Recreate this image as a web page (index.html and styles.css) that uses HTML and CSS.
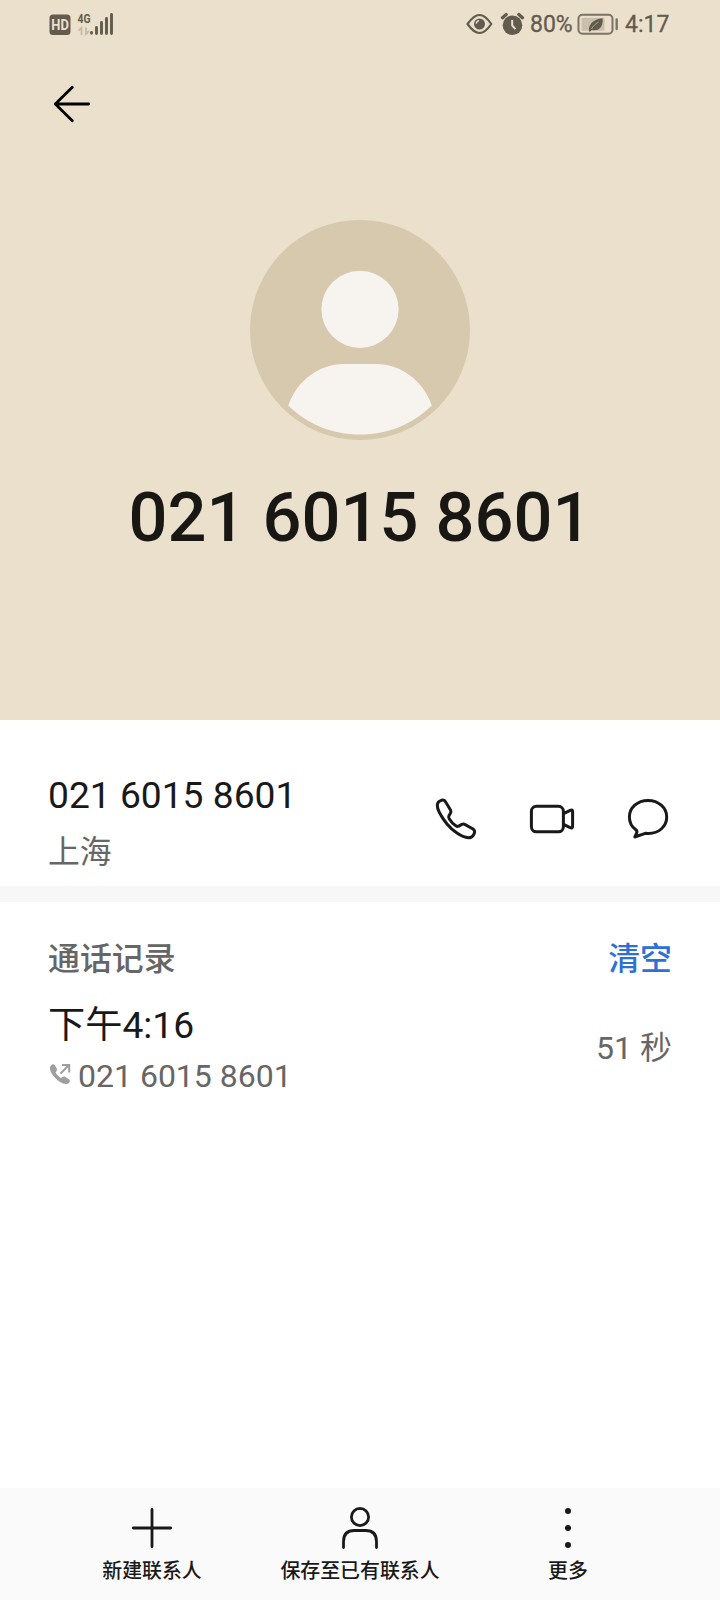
FILE: index.html
```html
<!DOCTYPE html>
<html lang="zh-CN">
<head>
<meta charset="utf-8">
<title>021 6015 8601</title>
<link rel="stylesheet" href="styles.css">
</head>
<body>
<div class="screen">
  <header class="hero">
    <div class="status">
      <svg class="status-left" viewBox="48 8 68 32" width="68" height="32">
        <rect x="49.500" y="14.500" width="21" height="20.500" rx="3.500" fill="#625b4e"/>
        <text class="hd" x="51.300" y="30" textLength="17.500" lengthAdjust="spacingAndGlyphs">HD</text>
        <text class="net" x="77.500" y="23" textLength="13" lengthAdjust="spacingAndGlyphs">4G</text>
        <path d="M78.500 30.500l3-2.500V35M86 27.500V34l3-3" fill="none" stroke="#c4baa7" stroke-width="1.800"/>
        <path d="M91.500 32.500v.8M96.500 27.500v6M101.500 22.500v11M106.500 18.500v15M111.500 14.500v19" stroke="#625b4e" stroke-width="2.900" stroke-linecap="round"/>
      </svg>
      <div class="status-right">
        <svg class="eye" viewBox="466 12 27 24" width="27" height="24" fill="none" stroke="#625b4e">
          <path d="M467.500 24C472 17.700 475.500 15 479.500 15S487 17.700 491.300 24C487 30.300 483.500 33 479.500 33S472 30.300 467.500 24Z" stroke-width="2.200" stroke-linejoin="round"/>
          <circle cx="479.500" cy="24" r="5.500" fill="#625b4e" stroke="none"/>
          <path d="M476.300 23.600a3.200 3.200 0 0 1 2.800-2.900" stroke="#ebe0cc" stroke-width="1.300"/>
        </svg>
        <svg class="alarm" viewBox="500 12 25 24" width="25" height="24">
          <circle cx="512.500" cy="25.200" r="9.800" fill="#625b4e"/>
          <path d="M502.500 17.800l3.700-3.300M522.500 17.800l-3.700-3.300" stroke="#625b4e" stroke-width="3.200" stroke-linecap="round"/>
          <path d="M512.200 20v5.300l3.200 3.800" fill="none" stroke="#ebe0cc" stroke-width="2"/>
        </svg>
        <span class="pct">80%</span>
        <svg class="battery" viewBox="577 12 42 24" width="42" height="24">
          <rect x="578.500" y="14.800" width="34" height="19" rx="4" fill="none" stroke="#7b7466" stroke-width="2"/>
          <rect x="581.500" y="17.800" width="23" height="13" rx="1" fill="#c9bfab"/>
          <path d="M589 31.500c-1-7 4.500-12.500 13.500-13.200 1.200 8-3.500 13.600-10.800 11.700l-1.700 1.800Z" fill="#625b4e"/>
          <path d="M591.500 29c1.500-3 4-5.200 7-6.800" fill="none" stroke="#c9bfab" stroke-width=".7"/>
          <path d="M616.700 19.500v9.500" stroke="#7b7466" stroke-width="2.400" stroke-linecap="round"/>
        </svg>
        <span class="clock">4:17</span>
      </div>
    </div>
    <svg class="back" viewBox="48 80 48 48" width="48" height="48" fill="none" stroke="#000" stroke-width="2.800" stroke-linecap="round" stroke-linejoin="round">
      <path d="M72.300 87.300L55.300 104L72.300 120.700M55.300 104H88.700"/>
    </svg>
    <svg class="avatar" viewBox="0 0 220 220" width="220" height="220">
      <circle cx="110" cy="110" r="110" fill="#d7c9ae"/>
      <g fill="#f7f3ee">
        <circle cx="110" cy="89.300" r="38.600"/>
        <path d="M93 144H127C150 144 173 160 181.800 185.500C163 204 138 214.500 110 214.500S57 204 38.200 185.500C47 160 70 144 93 144Z"/>
      </g>
    </svg>
    <h1 class="name">021 6015 8601</h1>
  </header>

  <section class="contact">
    <div>
      <div class="number">021 6015 8601</div>
      <div class="place">上海</div>
    </div>
    <div class="actions">
      <svg viewBox="432 795 48 48" width="48" height="48">
        <path d="M439 801.500L441.800 800.200Q444.200 799.700 445.500 801.800L450.500 810Q451.400 811.700 450.300 813.400L448.900 815.800Q448.200 817.200 449.200 818.800Q451.800 823.200 455.800 825.800Q457.300 826.800 458.800 826.100L461.800 824.400Q463.500 823.700 465.200 824.600L473 829Q475.200 830.500 474.400 833L473.300 835.300Q471.700 837.700 468.500 837.700C461 837.500 451.500 829.500 447 824C441.500 817 437 809.500 437.300 805Q437.500 802.800 439 801.500Z"/>
      </svg>
      <svg viewBox="528 795 48 48" width="48" height="48">
        <rect x="531.400" y="806.300" width="32" height="25.500" rx="5"/>
        <path d="M563.500 813.700L570.200 810.300Q572.600 809.300 572.600 811.700V826.300Q572.600 828.700 570.200 827.700L563.500 824.300"/>
      </svg>
      <svg viewBox="624 795 48 48" width="48" height="48">
        <path d="M634.800 837L646 833.200Q647.200 833.500 648.500 833.500C659 833.500 666.700 826.300 666.700 817C666.700 807.700 658.500 800.400 648 800.400S629.400 807.700 629.400 817C629.400 822.500 632 827 635.800 829.800Q637.500 831 636.600 833.200Z"/>
      </svg>
    </div>
  </section>

  <section class="log">
    <div class="log-head"><span>通话记录</span><span class="clear">清空</span></div>
    <div class="call">
      <div>
        <div class="time">下午4:16</div>
        <div class="line">
          <svg viewBox="49 1062 24 24" width="24" height="24">
            <path d="M51 1065.500Q53 1063.500 54.800 1065L57 1069Q57.500 1070.300 55.500 1072.500Q57.500 1076 61 1078Q63 1076 64.500 1076.500L69.300 1079.500Q70.800 1081 69 1083Q66.500 1085 62 1083C56.500 1080.500 49.300 1072.500 50 1067.500Q50.200 1066.200 51 1065.500Z" fill="#9e9e9e"/>
            <path d="M60.500 1073.500L69 1065M62 1065H69.200V1072.500" fill="none" stroke="#9e9e9e" stroke-width="2"/>
          </svg>
          <span>021 6015 8601</span>
        </div>
      </div>
      <div class="duration">51 秒</div>
    </div>
  </section>

  <nav class="bar">
    <div class="item">
      <svg viewBox="0 0 48 48" width="48" height="48"><path d="M24 5.300V42.700M5.300 24H42.700"/></svg>
      <span>新建联系人</span>
    </div>
    <div class="item">
      <svg viewBox="0 0 48 48" width="48" height="48"><circle cx="24" cy="13" r="8.600"/><path d="M7.500 43.500V37.500Q7.500 26.500 18.500 26.500H29.500Q40.500 26.500 40.500 37.500V43.500"/></svg>
      <span>保存至已有联系人</span>
    </div>
    <div class="item">
      <svg viewBox="0 0 48 48" width="48" height="48"><g class="dots"><circle cx="24" cy="7" r="3"/><circle cx="24" cy="24" r="3"/><circle cx="24" cy="41" r="3"/></g></svg>
      <span>更多</span>
    </div>
  </nav>
</div>
</body>
</html>
```
FILE: styles.css
```css
* { box-sizing: border-box; }
body {
  margin: 0;
  background: #fff;
  color: #191919;
  font-family: Roboto, "Noto Sans CJK SC", sans-serif;
}
svg { display: block; flex: none; }
.screen {
  width: 720px;
  height: 1600px;
  display: flex;
  flex-direction: column;
}
.hero {
  height: 720px;
  background: #ebe0cc;
  display: flex;
  flex-direction: column;
  align-items: center;
}
.status {
  width: 100%;
  height: 48px;
  padding: 0 48px;
  display: flex;
  justify-content: space-between;
  align-items: center;
  color: #625b4e;
}
.hd { font: 700 14px Roboto, sans-serif; fill: #ebe0cc; }
.net { font: 700 13.500px Roboto, sans-serif; fill: #625b4e; }
.status-right {
  display: flex;
  align-items: center;
  font-size: 23px;
  line-height: 28px;
  -webkit-text-stroke: 0.3px #625b4e;
}
.alarm { margin-left: 7px; }
.pct { margin-left: 5px; padding-top: 2px; width: 42px; white-space: nowrap; }
.battery { margin-left: 5px; }
.clock { margin-left: 6px; padding-top: 2px; width: 47px; white-space: nowrap; }
.back { align-self: flex-start; margin: 32px 0 0 48px; }
.avatar { margin-top: 92px; }
.name {
  margin: 38px 0 0;
  font-weight: 500;
  font-size: 68.600px;
  line-height: 80px;
  white-space: nowrap;
  color: #191713;
}
.contact {
  height: 166px;
  padding: 53px 48px 0;
  display: flex;
  justify-content: space-between;
}
.number { font-size: 37.200px; line-height: 44px; }
.place { margin-top: 15px; font-size: 31.800px; line-height: 40px; color: #666; }
.actions { display: flex; gap: 48px; padding-top: 22px; }
.actions svg { fill: none; stroke: #191919; stroke-width: 3; stroke-linejoin: round; }
.log {
  flex: 1;
  border-top: 16px solid #f7f7f7;
  padding: 37px 48px 0;
}
.log-head {
  display: flex;
  justify-content: space-between;
  font-size: 31.900px;
  line-height: 40px;
  font-weight: 500;
  color: #666;
}
.clear { color: #2c70d8; }
.call {
  margin-top: 24px;
  display: flex;
  justify-content: space-between;
  align-items: center;
}
.time { font-size: 37.200px; line-height: 44px; }
.line {
  margin-top: 9px;
  padding-left: 1px;
  display: flex;
  gap: 5px;
  font-size: 32px;
  line-height: 40px;
  color: #666;
}
.line svg { margin-top: 6px; }
.duration { margin-bottom: 4px; font-size: 32px; line-height: 40px; color: #666; }
.bar {
  height: 112px;
  padding: 16px 48px 0;
  background: #fafafa;
  display: grid;
  grid-template-columns: repeat(3, 1fr);
}
.item {
  display: flex;
  flex-direction: column;
  align-items: center;
  gap: 8px;
  font-size: 19.900px;
  line-height: 24px;
  font-weight: 500;
}
.item svg { fill: none; stroke: #191919; stroke-width: 2.800; stroke-linecap: round; }
.dots { fill: #191919; stroke: none; }
```
